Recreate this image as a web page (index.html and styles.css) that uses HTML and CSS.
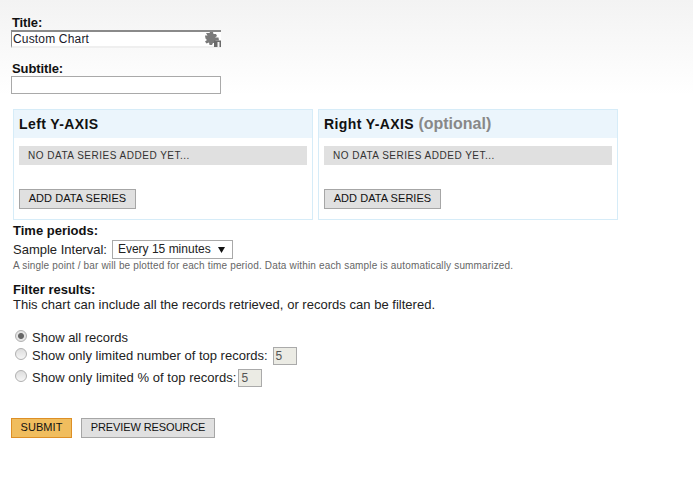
FILE: index.html
```html
<!DOCTYPE html>
<html lang="en">
<head>
<meta charset="utf-8">
<title>Custom Chart</title>
<link rel="stylesheet" href="styles.css">
</head>
<body>
<form class="page">
  <div class="field">
    <label class="label label-top">Title:</label>
    <div class="title-box">
      <span class="title-value">Custom Chart</span>
      <svg class="puzzle" width="16" height="15" viewBox="0 0 16 15"><path fill="#7a7a7a" d="M1 1h3.500L5 0h3l.5 2H11l1 2-2 1.500h3.500L14 8.500H10.500V11H8L7 13H4.500L4 10.500 1.500 11.500 0 9.500 2 8 .5 6.500 0 3.500H2.500z"/><rect x="9" y="8.500" width="7" height="6.500" fill="#6a6a6a"/><rect x="12.500" y="10" width="2" height="5" fill="#f4f4f4"/></svg>
    </div>
  </div>
  <div class="field subtitle-field">
    <label class="label label-top">Subtitle:</label>
    <input class="text-input" type="text">
  </div>
  <div class="panels">
    <section class="panel">
      <h2 class="panel-head">Left Y-AXIS</h2>
      <div class="empty">NO DATA SERIES ADDED YET...</div>
      <button class="btn" type="button">ADD DATA SERIES</button>
    </section>
    <section class="panel">
      <h2 class="panel-head">Right Y-AXIS <span class="optional">(optional)</span></h2>
      <div class="empty">NO DATA SERIES ADDED YET...</div>
      <button class="btn" type="button">ADD DATA SERIES</button>
    </section>
  </div>
  <div class="time">
    <div class="label">Time periods:</div>
    <div class="interval">
      <span>Sample Interval:</span>
      <span class="select">Every 15 minutes<svg class="caret" width="7" height="6" viewBox="0 0 7 6"><path d="M0 0h7L3.500 6z" fill="#111"/></svg></span>
    </div>
    <p class="hint">A single point / bar will be plotted for each time period. Data within each sample is automatically summarized.</p>
  </div>
  <div class="filter">
    <div class="label">Filter results:</div>
    <p class="desc">This chart can include all the records retrieved, or records can be filtered.</p>
  </div>
  <div class="options">
    <div class="option first"><span class="radio checked"></span><span>Show all records</span></div>
    <div class="option second"><span class="radio"></span><span class="opt-text">Show only limited number of top records:</span><span class="num num-a">5</span></div>
    <div class="option third"><span class="radio"></span><span class="opt-text opt-wide">Show only limited % of top records:</span><span class="num">5</span></div>
  </div>
  <div class="actions">
    <button class="btn submit" type="button">SUBMIT</button>
    <button class="btn preview" type="button">PREVIEW RESOURCE</button>
  </div>
</form>
</body>
</html>
```
FILE: styles.css
```css
html, body { margin: 0; padding: 0; }
body {
  height: 493px;
  overflow: hidden;
  background: linear-gradient(#f3f3f3 0, #ffffff 95px);
  font-family: "Liberation Sans", Arial, sans-serif;
  font-size: 13px;
  color: #222;
}
.page { padding: 16px 0 0 11px; width: 640px; }
.label { display: block; font-size: 13px; font-weight: bold; line-height: 14px; color: #111; }
.label-top { padding-left: 1px; letter-spacing: -0.1px; }
.title-box {
  box-sizing: border-box;
  width: 210px;
  height: 18px;
  border-top: 2px solid #8a8a8a;
  border-left: 1px solid #8a8a8a;
  border-bottom: 2px solid #efefef;
  background: #fff;
  display: flex;
  align-items: center;
  font-size: 12px;
  padding-left: 1px;
  position: relative;
}
.title-value { line-height: 14px; color: #1a1a2a; letter-spacing: 0.17px; }
.puzzle { position: absolute; right: 0; top: 0; }
.subtitle-field { margin-top: 14px; }
.text-input {
  display: block;
  box-sizing: border-box;
  width: 210px;
  height: 18px;
  margin: 0;
  padding: 0;
  border: 1px solid #a9a9a9;
  background: #fff;
}
.panels { display: flex; gap: 5px; margin: 15px 0 0 2px; }
.panel {
  box-sizing: border-box;
  width: 300px;
  height: 111px;
  border: 1px solid #d6ecf8;
  background: #fff;
}
.panel-head {
  margin: 0;
  height: 28px;
  padding-left: 5px;
  background: #ebf5fc;
  font-size: 14px;
  line-height: 28px;
  font-weight: bold;
  letter-spacing: 0.4px;
  color: #111;
}
.optional { font-size: 16px; letter-spacing: 0; color: #888; }
.empty {
  margin: 8px 5px 0;
  height: 19px;
  line-height: 19px;
  padding-left: 9px;
  background: #e0e0e0;
  font-size: 10px;
  letter-spacing: 0.5px;
  color: #333;
}
.btn {
  display: inline-block;
  box-sizing: border-box;
  height: 20px;
  margin: 0;
  padding: 0 0 2px;
  width: 117px;
  border: 1px solid #a6a6a6;
  background: #e0e0e0;
  font-family: inherit;
  font-size: 11px;
  line-height: 16px;
  letter-spacing: 0.05px;
  color: #111;
}
.panel .btn { margin: 24px 0 0 5px; display: block; }
.time { margin: 4px 0 0 2px; }
.interval { display: flex; align-items: center; gap: 5px; margin-top: 2px; color: #222; }
.select {
  box-sizing: border-box;
  width: 121px;
  height: 19px;
  border: 1px solid #a9a9a9;
  background: #fff;
  padding: 0 7px 0 5px;
  font-size: 12px;
  line-height: 17px;
  display: flex;
  align-items: center;
  justify-content: space-between;
}
.hint { margin: 1px 0 0; font-size: 10px; letter-spacing: 0.16px; line-height: 12px; color: #666; }
.filter { margin: 11px 0 0 2px; }
.desc { margin: 1px 0 0; line-height: 14px; color: #222; letter-spacing: 0.02px; }
.options { margin: 18px 0 0 4px; }
.option { display: flex; align-items: center; line-height: 15px; color: #222; }
.second { margin-top: 2px; }
.third { margin-top: 4px; }
.opt-text { padding-bottom: 2px; }
.opt-wide { letter-spacing: 0.04px; }
.radio {
  box-sizing: border-box;
  width: 12px;
  height: 12px;
  margin-right: 5px;
  border-radius: 50%;
  border: 1px solid #b0b0b0;
  background: linear-gradient(#ddd, #f6f6f6);
  position: relative;
  top: -2px;
}
.checked { background: radial-gradient(circle, #666 0 2.500px, #e4e4e4 3.500px); }
.num {
  box-sizing: border-box;
  width: 24px;
  height: 18px;
  border: 1px solid #aaa;
  background: #ebebe4;
  padding-left: 2px;
  font-size: 12px;
  line-height: 16px;
  color: #555;
  margin-left: 2px;
}
.num-a { margin-left: 5px; }
.actions { display: flex; gap: 9px; margin-top: 31px; }
.submit { width: 61px; background: #f0bd5e; border-color: #dd8f26; }
.preview { width: 134px; letter-spacing: -0.1px; }
```
